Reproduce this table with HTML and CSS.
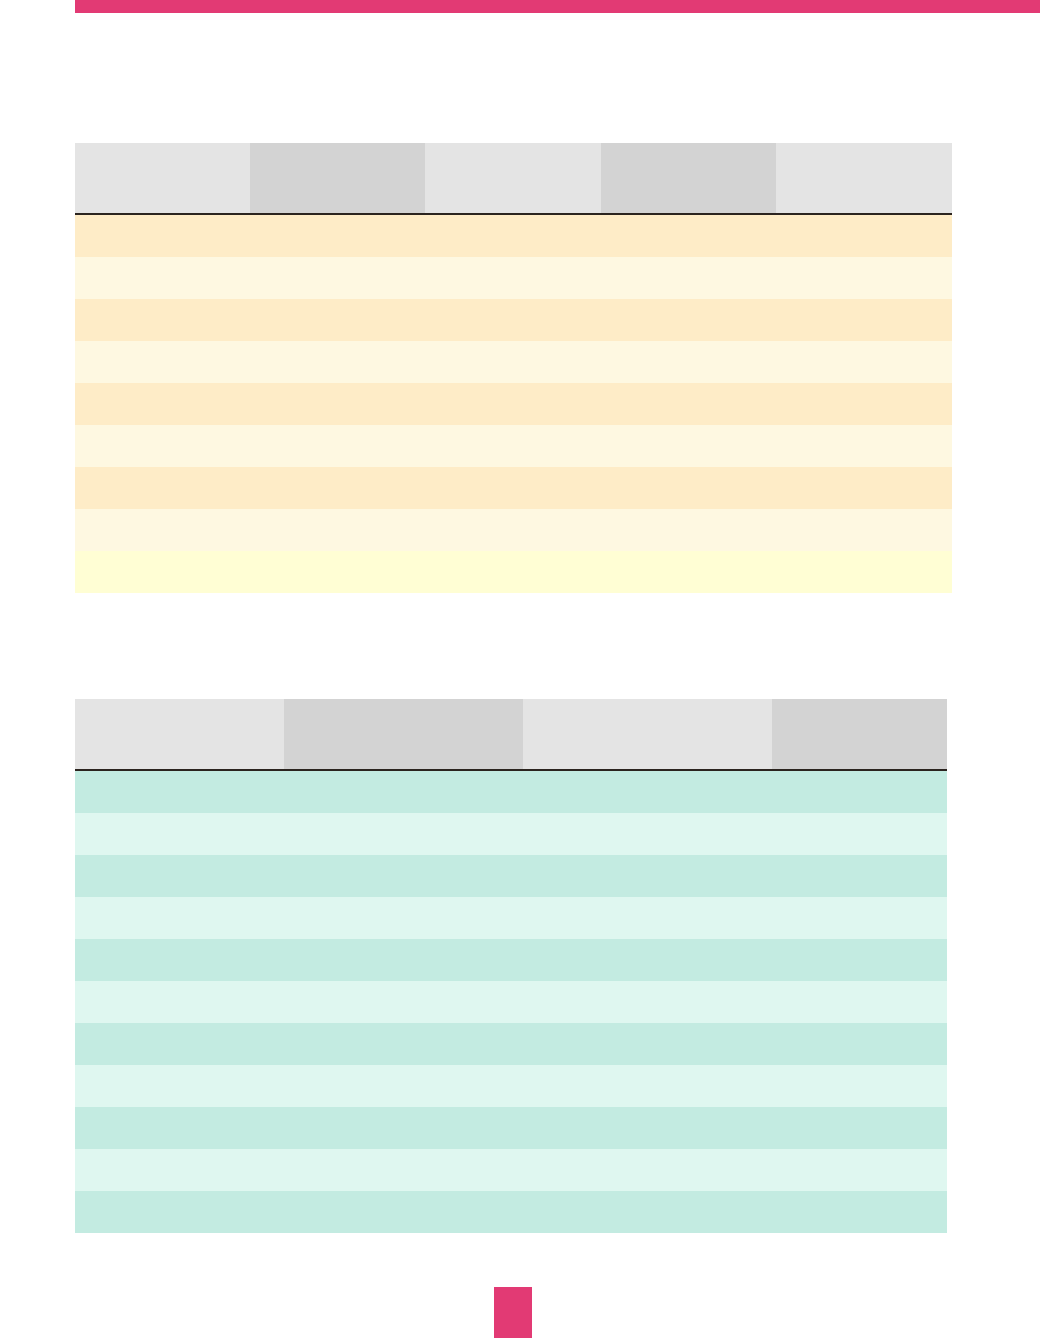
FILE: index.html
```html
<!DOCTYPE html>
<html lang="en">
<head>
<meta charset="utf-8">
<title>Tables</title>
<link rel="stylesheet" href="styles.css">
</head>
<body>
<div class="page">
  <div class="topbar"></div>

  <div class="table table-one">
    <div class="head">
      <div class="hcell light"></div>
      <div class="hcell dark"></div>
      <div class="hcell light"></div>
      <div class="hcell dark"></div>
      <div class="hcell light"></div>
    </div>
    <div class="row warm-a"></div>
    <div class="row warm-b"></div>
    <div class="row warm-a"></div>
    <div class="row warm-b"></div>
    <div class="row warm-a"></div>
    <div class="row warm-b"></div>
    <div class="row warm-a"></div>
    <div class="row warm-b"></div>
    <div class="row warm-total"></div>
  </div>

  <div class="table table-two">
    <div class="head">
      <div class="hcell light"></div>
      <div class="hcell dark"></div>
      <div class="hcell light"></div>
      <div class="hcell dark"></div>
    </div>
    <div class="row teal-a"></div>
    <div class="row teal-b"></div>
    <div class="row teal-a"></div>
    <div class="row teal-b"></div>
    <div class="row teal-a"></div>
    <div class="row teal-b"></div>
    <div class="row teal-a"></div>
    <div class="row teal-b"></div>
    <div class="row teal-a"></div>
    <div class="row teal-b"></div>
    <div class="row teal-a"></div>
  </div>

  <div class="footer">
    <div class="page-tab"></div>
  </div>
</div>
</body>
</html>
```

FILE: styles.css
```css
html, body {
  margin: 0;
  padding: 0;
  background: #ffffff;
  font-family: "Liberation Sans", Arial, sans-serif;
}

.page {
  padding-left: 75px;
  height: 1338px;
  overflow: hidden;
  display: flex;
  flex-direction: column;
}

.topbar {
  height: 13px;
  background: #e23a74;
}

.table {
  display: flex;
  flex-direction: column;
}

.table-one {
  margin-top: 130px;
  width: 877px;
}

.table-two {
  margin-top: 106px;
  width: 872px;
}

.head {
  display: grid;
  height: 70px;
  border-bottom: 2px solid #2b241f;
}

.table-one .head {
  grid-template-columns: 175px 175px 176px 175px 176px;
}

.table-two .head {
  grid-template-columns: 209px 239px 249px 175px;
}

.hcell.light { background: #e4e4e4; }
.hcell.dark { background: #d3d3d3; }

.row {
  height: 42px;
}

.warm-a { background: #feecc7; }
.warm-b { background: #fef8e1; }
.warm-total { background: #fffed4; }

.teal-a { background: #c3ebe1; }
.teal-b { background: #dff7f0; }

.footer {
  margin-top: 54px;
  display: flex;
  padding-left: 419px;
}

.page-tab {
  width: 38px;
  height: 51px;
  background: #e23a74;
}
```
